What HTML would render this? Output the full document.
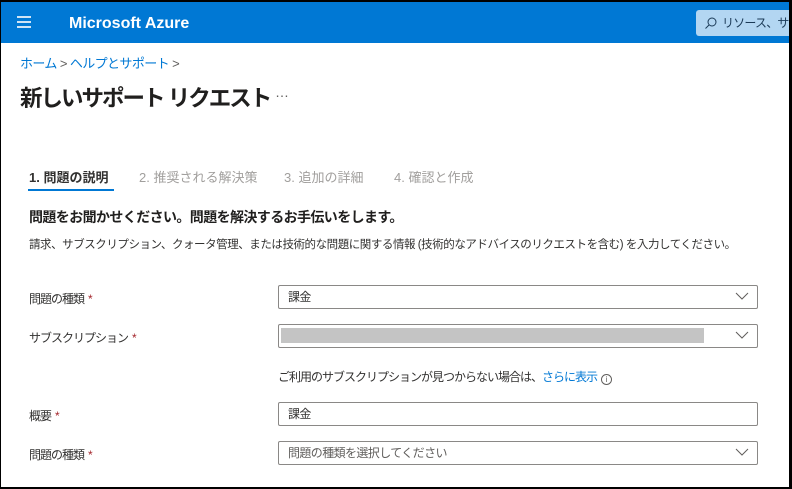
<!DOCTYPE html><html><head><meta charset="utf-8"><style>
*{margin:0;padding:0;box-sizing:border-box}
body{width:792px;height:489px;overflow:hidden;background:#000;font-family:"Liberation Sans","Noto Sans CJK JP",sans-serif;position:relative}
.page{position:absolute;left:1px;top:2px;width:788px;height:485px;background:#fff;overflow:hidden}
.hdr{position:absolute;left:0;top:0;width:788px;height:41px;background:#0078d4}
.a{position:absolute;white-space:nowrap}
.box{position:absolute;left:277px;width:480px;height:24px;border:1px solid #8a8886;border-radius:2px;background:#fff;font-size:12px;color:#323130;padding-left:9px;line-height:22px;letter-spacing:-0.6px}
.chev{position:absolute;right:8px;top:6px}
.lbl{position:absolute;left:28px;font-size:12px;color:#323130;letter-spacing:-1px}
.lbl b{color:#a4262c;font-weight:normal;margin-left:4px}
</style></head><body><div class="page">
<div class="hdr">
<div class="a" style="left:16px;top:14px;width:14px;height:2px;background:#cfe4f5;box-shadow:0 5px 0 #cfe4f5,0 10px 0 #cfe4f5"></div>
<div class="a" style="left:68px;top:13px;color:#fff;font-weight:bold;font-size:16px">Microsoft Azure</div>
<div class="a" style="left:695px;top:8px;width:100px;height:26px;background:#b3d6f2;border-radius:3px;font-size:12px;color:#1b3a57;line-height:26px;padding-left:26px;letter-spacing:-0.8px">リソース、サービス
<svg style="position:absolute;left:8px;top:7px" width="13" height="13" viewBox="0 0 13 13"><circle cx="8" cy="5" r="4" fill="none" stroke="#1b3a57" stroke-width="1"/><path d="M5 8L1.5 11.5" stroke="#1b3a57" stroke-width="1"/></svg></div>
</div>
<div class="a" style="left:19px;top:51px;font-size:13px;color:#0078d4;letter-spacing:-0.6px">ホーム <span style="color:#605e5c">&gt;</span> ヘルプとサポート <span style="color:#605e5c">&gt;</span></div>
<div class="a" style="left:19px;top:79px;font-size:22.5px;color:#201f1e;letter-spacing:-2px;font-weight:bold">新しいサポート リクエスト</div>
<div class="a" style="left:274px;top:82px;font-size:14px;color:#605e5c">…</div>
<div class="a" style="left:28px;top:165px;font-size:13px;color:#323130;font-weight:bold">1. 問題の説明</div>
<div class="a" style="left:27px;top:187px;width:86px;height:2px;background:#0078d4"></div>
<div class="a" style="left:138px;top:165px;font-size:13px;color:#a19f9d">2. 推奨される解決策</div>
<div class="a" style="left:283px;top:165px;font-size:13px;color:#a19f9d">3. 追加の詳細</div>
<div class="a" style="left:393px;top:165px;font-size:13px;color:#a19f9d">4. 確認と作成</div>
<div class="a" style="left:28px;top:205px;font-size:14px;color:#201f1e;font-weight:bold;letter-spacing:-0.6px">問題をお聞かせください。問題を解決するお手伝いをします。</div>
<div class="a" style="left:28px;top:234px;font-size:11.5px;color:#323130;letter-spacing:-0.45px">請求、サブスクリプション、クォータ管理、または技術的な問題に関する情報 (技術的なアドバイスのリクエストを含む) を入力してください。</div>
<div class="lbl" style="top:288px">問題の種類<b>*</b></div>
<div class="box" style="top:283px">課金<svg class="chev" width="14" height="9"><path d="M1 1l6 6 6-6" fill="none" stroke="#605e5c"/></svg></div>
<div class="lbl" style="top:327px">サブスクリプション<b>*</b></div>
<div class="box" style="top:322px"><div class="a" style="left:2px;top:3px;width:423px;height:15px;background:#c4c4c4"></div><svg class="chev" width="14" height="9"><path d="M1 1l6 6 6-6" fill="none" stroke="#605e5c"/></svg></div>
<div class="a" style="left:277px;top:366px;font-size:12px;color:#323130;letter-spacing:-1px">ご利用のサブスクリプションが見つからない場合は、<span style="color:#0078d4">さらに表示</span><span style="display:inline-block;width:11px;height:11px;border:1px solid #605e5c;border-radius:50%;font-size:8px;line-height:9px;text-align:center;color:#605e5c;vertical-align:-1px;letter-spacing:0;margin-left:4px">i</span></div>
<div class="lbl" style="top:405px">概要<b>*</b></div>
<div class="box" style="top:400px">課金</div>
<div class="lbl" style="top:444px">問題の種類<b>*</b></div>
<div class="box" style="top:439px;color:#605e5c">問題の種類を選択してください<svg class="chev" width="14" height="9"><path d="M1 1l6 6 6-6" fill="none" stroke="#605e5c"/></svg></div>
</div></body></html>
